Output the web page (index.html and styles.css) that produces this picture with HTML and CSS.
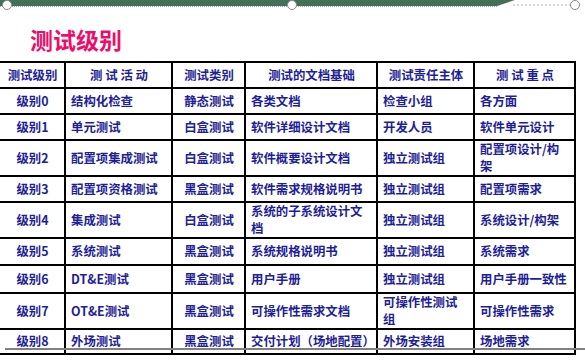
FILE: index.html
```html
<!DOCTYPE html>
<html lang="zh">
<head>
<meta charset="utf-8">
<link rel="stylesheet" href="styles.css">
</head>
<body>
<div class="page">
  <svg class="topbar" width="585" height="14" viewBox="0 0 585 14">
    <polygon points="0,0 515,0 497,6 0,6" fill="#44705a"/>
    <line x1="0" y1="6.5" x2="497" y2="6.5" stroke="#9aa" stroke-width="1" stroke-dasharray="1 1"/>
    <line x1="513" y1="5" x2="570" y2="5" stroke="#b0b0b0" stroke-width="1" stroke-dasharray="2 2"/>
    <circle cx="7" cy="5" r="4.5" fill="#fff" stroke="#8a8a8a" stroke-width="1"/>
    <circle cx="292" cy="5" r="4.5" fill="#fff" stroke="#8a8a8a" stroke-width="1"/>
    <circle cx="575" cy="5" r="4.5" fill="#fff" stroke="#8a8a8a" stroke-width="1"/>
  </svg>
  <h1 class="title">测试级别</h1>
  <div class="grid">
    <div class="cell hd">测试级别</div><div class="cell hd">测 试 活 动</div><div class="cell hd">测试类别</div><div class="cell hd">测试的文档基础</div><div class="cell hd">测试责任主体</div><div class="cell hd">测 试 重 点</div>

    <div class="cell ct">级别0</div><div class="cell">结构化检查</div><div class="cell ct">静态测试</div><div class="cell">各类文档</div><div class="cell">检查小组</div><div class="cell">各方面</div>

    <div class="cell ct">级别1</div><div class="cell">单元测试</div><div class="cell ct">白盒测试</div><div class="cell">软件详细设计文档</div><div class="cell">开发人员</div><div class="cell">软件单元设计</div>

    <div class="cell ct">级别2</div><div class="cell">配置项集成测试</div><div class="cell ct">白盒测试</div><div class="cell">软件概要设计文档</div><div class="cell">独立测试组</div><div class="cell">配置项设计/构<br>架</div>

    <div class="cell ct">级别3</div><div class="cell">配置项资格测试</div><div class="cell ct">黑盒测试</div><div class="cell">软件需求规格说明书</div><div class="cell">独立测试组</div><div class="cell">配置项需求</div>

    <div class="cell ct">级别4</div><div class="cell">集成测试</div><div class="cell ct">白盒测试</div><div class="cell">系统的子系统设计文<br>档</div><div class="cell">独立测试组</div><div class="cell">系统设计/构架</div>

    <div class="cell ct">级别5</div><div class="cell">系统测试</div><div class="cell ct">黑盒测试</div><div class="cell">系统规格说明书</div><div class="cell">独立测试组</div><div class="cell">系统需求</div>

    <div class="cell ct">级别6</div><div class="cell">DT&amp;E测试</div><div class="cell ct">黑盒测试</div><div class="cell">用户手册</div><div class="cell">独立测试组</div><div class="cell">用户手册一致性</div>

    <div class="cell ct">级别7</div><div class="cell">OT&amp;E测试</div><div class="cell ct">黑盒测试</div><div class="cell">可操作性需求文档</div><div class="cell">可操作性测试<br>组</div><div class="cell">可操作性需求</div>

    <div class="cell ct">级别8</div><div class="cell">外场测试</div><div class="cell ct">黑盒测试</div><div class="cell">交付计划（场地配置）</div><div class="cell">外场安装组</div><div class="cell">场地需求</div>
  </div>
  <div class="footline"></div>
</div>
</body>
</html>
```

FILE: styles.css
```css
html, body {
  margin: 0;
  padding: 0;
  background: #fff;
}
.page {
  position: relative;
  width: 585px;
  height: 360px;
  overflow: hidden;
  font-family: "Noto Sans CJK SC", "Noto Sans", sans-serif;
}
.topbar {
  display: block;
}
.title {
  margin: 0;
  padding: 4px 0 0 30px;
  height: 43px;
  line-height: 43px;
  font-size: 23px;
  font-weight: 700;
  color: #ee0d6b;
}
.grid {
  display: grid;
  width: 576px;
  grid-template-columns: 66px 107px 73px 132px 97px 101px;
  grid-template-rows: 26px 26px 26px 36px 26px 36px 27px 28px 36px 25px;
  border-top: 2px solid #000;
  color: #1e1e96;
  font-size: 12.4px;
  font-weight: 700;
  line-height: 17px;
}
.cell {
  box-sizing: border-box;
  display: flex;
  flex-direction: column;
  justify-content: center;
  align-items: flex-start;
  padding: 0 4px 0 5px;
  border-right: 2px solid #000;
  border-bottom: 2px solid #000;
  white-space: nowrap;
}
.cell.hd,
.cell.ct {
  align-items: center;
  text-align: center;
}
.footline {
  position: absolute;
  left: 5px;
  right: 0;
  top: 348px;
  height: 2px;
  background: #808080;
}
```
